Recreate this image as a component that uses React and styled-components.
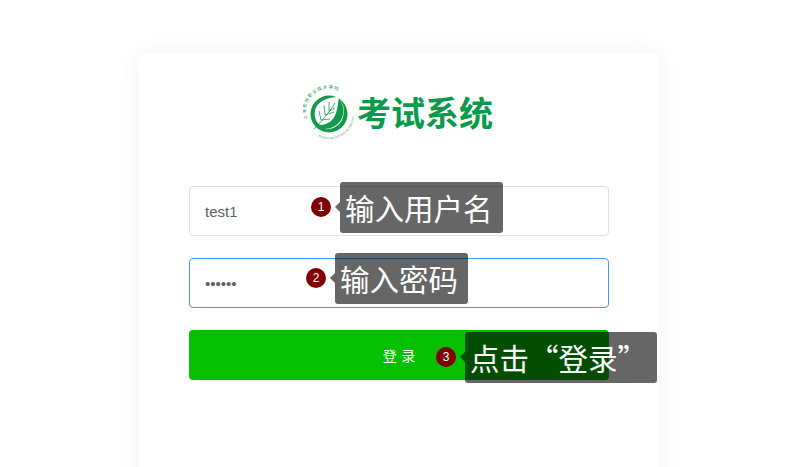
import styled, { createGlobalStyle } from "styled-components";

const GlobalStyle = createGlobalStyle`
  html, body {
    margin: 0;
    height: 100%;
    background: #fff;
    overflow: hidden;
  }
  body {
    font-family: "Liberation Sans", "Noto Sans CJK SC", sans-serif;
  }
`;

const Page = styled.div`
  display: flex;
  justify-content: center;
  height: 467px;
  padding: 53px 1px 0 0;
  box-sizing: border-box;
  overflow: hidden;
`;

const Card = styled.div`
  flex: none;
  width: 420px;
  height: 500px;
  padding: 0 50px;
  background: #fff;
  border-radius: 4px;
  box-shadow: 0 0 25px rgba(0, 0, 0, 0.06);
`;

const Brand = styled.div`
  display: flex;
  justify-content: center;
  align-items: center;
  height: 118px;
  margin-bottom: 15px;
  padding-right: 2px;
`;

const Title = styled.h1`
  margin: 0;
  font-family: "Noto Sans CJK SC", sans-serif;
  font-size: 34px;
  line-height: 50px;
  font-weight: 700;
  color: #0a9a4c;
  white-space: nowrap;
`;

const Field = styled.div`
  position: relative;
  height: 50px;
  margin-bottom: 22px;
`;

const Input = styled.input`
  display: block;
  box-sizing: border-box;
  width: 100%;
  height: 50px;
  padding: 0 15px;
  font-family: "Liberation Sans", sans-serif;
  font-size: 15px;
  color: #606266;
  background: #fff;
  border: 1px solid ${({ $focused }) => ($focused ? "#409eff" : "#dcdfe6")};
  border-radius: 4px;
  outline: none;
`;

const Button = styled.button`
  display: block;
  width: 100%;
  height: 50px;
  padding: 0;
  font-family: "Noto Sans CJK SC", sans-serif;
  font-size: 14px;
  word-spacing: 1.5px;
  color: #fff;
  background: #05c000;
  border: none;
  border-radius: 4px;
`;

const Hint = styled.div`
  position: absolute;
  left: ${({ $left }) => $left}px;
  top: ${({ $top }) => $top}px;
  display: flex;
  align-items: center;
  gap: 9px;
`;

const Badge = styled.span`
  display: flex;
  align-items: center;
  justify-content: center;
  width: 20px;
  height: 20px;
  margin-bottom: 1px;
  border-radius: 50%;
  background: #800000;
  color: #fff;
  font-family: "Liberation Sans", sans-serif;
  font-size: 12px;
`;

const Tip = styled.div`
  position: relative;
  height: 51px;
  padding: 0 10px 0 5px;
  background: rgba(0, 0, 0, 0.6);
  border-radius: 3px;
  color: #fff;
  font-family: "Noto Sans CJK SC", sans-serif;
  font-size: 29.5px;
  line-height: 51px;
  white-space: nowrap;

  &::before {
    content: "";
    position: absolute;
    left: -5px;
    top: 20px;
    border-style: solid;
    border-width: 5px 5px 5px 0;
    border-color: transparent rgba(0, 0, 0, 0.6) transparent transparent;
  }
`;

const Logo = () => (
  <svg width="54" height="56" viewBox="0 0 54 56" aria-hidden="true">
    <defs>
      <path id="ring-top" d="M4.3 35 A22.3 22.3 0 0 1 46 19" />
      <path id="ring-bottom" d="M15 52.5 A25 25 0 0 0 49 20" />
    </defs>
    <circle cx="26" cy="30" r="18.5" fill="#129a4a" />
    {/* thin white arc inside the disc */}
    <path d="M36 15 C41 21 42 29 38 36 C34 42 28 45 21 45 C29 46 36 42 39 36 C42 29 42 21 36 15 Z" fill="#fff" />
    {/* leaf */}
    <path d="M36 13 C27 13 14 16 12 27 C11 33 13 38 17 41 C25 41 31 36 33 29 C35 23 35 18 36 13 Z" fill="#fff" />
    <path
      d="M11 45 C18 38 25 30 32 19 M18 36 L16 27 M22 31 L21 21 M26 27 L26 18 M18 36 L27 35 M22 31 L31 28 M26 27 L32 24"
      fill="none"
      stroke="#129a4a"
      strokeWidth="0.8"
    />
    <text fontFamily="Noto Sans CJK SC, sans-serif" fontSize="4.4" fill="#128f45" letterSpacing="1">
      <textPath href="#ring-top">上海农林职业技术学院</textPath>
    </text>
    <text fontFamily="Liberation Serif, serif" fontSize="2.7" fill="#128f45">
      <textPath href="#ring-bottom">TUOXI AGRICULTURAL TECHNOLOGY</textPath>
    </text>
  </svg>
);

const hints = {
  user: { left: 122, top: -4, step: 1, text: "输入用户名" },
  pass: { left: 117, top: -5, step: 2, text: "输入密码" },
  login: { left: 247, top: 2, step: 3, text: "点击“登录”" },
};

const StepHint = ({ left, top, step, text }) => (
  <Hint $left={left} $top={top}>
    <Badge>{step}</Badge>
    <Tip>{text}</Tip>
  </Hint>
);

export default function App() {
  return (
    <>
      <GlobalStyle />
      <Page>
        <Card>
          <Brand>
            <Logo />
            <Title>考试系统</Title>
          </Brand>
          <Field>
            <Input type="text" defaultValue="test1" readOnly />
            <StepHint {...hints.user} />
          </Field>
          <Field>
            <Input type="password" defaultValue="123456" readOnly $focused />
            <StepHint {...hints.pass} />
          </Field>
          <Field>
            <Button>登 录</Button>
            <StepHint {...hints.login} />
          </Field>
        </Card>
      </Page>
    </>
  );
}
